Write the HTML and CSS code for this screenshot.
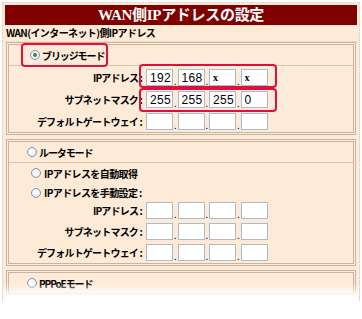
FILE: index.html
```html
<!DOCTYPE html>
<html lang="ja">
<head>
    <meta charset="UTF-8">
    <title>WAN側IPアドレスの設定</title>
    <link rel="stylesheet" href="styles.css">
</head>
<body>

    <div class="frame">
        <!-- タイトル -->
        <div class="title">WAN側IPアドレスの設定</div>
        <div class="subtitle">WAN(インターネット)側IPアドレス</div>

        <!-- ブリッジモード -->
        <div class="section">
            <div class="mode-row bridge">
                <label class="mode"><input type="radio" name="mode" checked>ブリッジモード</label>
                <span class="mark mark-mode"></span>
            </div>
            <div class="fields">
                <div class="field">
                    <span class="label">IPアドレス :</span>
                    <span class="ip"><input value="192">.<input value="168">.<input class="x" value="x">.<input class="x" value="x"></span>
                </div>
                <div class="field">
                    <span class="label">サブネットマスク :</span>
                    <span class="ip"><input value="255">.<input value="255">.<input value="255">.<input value="0"></span>
                </div>
                <div class="field">
                    <span class="label">デフォルトゲートウェイ :</span>
                    <span class="ip"><input>.<input>.<input>.<input></span>
                </div>
                <span class="mark mark-ip"></span>
                <span class="mark mark-mask"></span>
            </div>
        </div>

        <!-- ルータモード -->
        <div class="section">
            <div class="mode-row">
                <label class="mode"><input type="radio" name="mode">ルータモード</label>
            </div>
            <div class="fields router">
                <label class="sub"><input type="radio" name="wan">IPアドレスを自動取得</label>
                <label class="sub"><input type="radio" name="wan">IPアドレスを手動設定 :</label>
                <div class="field">
                    <span class="label">IPアドレス :</span>
                    <span class="ip"><input>.<input>.<input>.<input></span>
                </div>
                <div class="field">
                    <span class="label">サブネットマスク :</span>
                    <span class="ip"><input>.<input>.<input>.<input></span>
                </div>
                <div class="field">
                    <span class="label">デフォルトゲートウェイ :</span>
                    <span class="ip"><input>.<input>.<input>.<input></span>
                </div>
            </div>
        </div>

        <!-- PPPoEモード -->
        <div class="section last">
            <div class="mode-row">
                <label class="mode"><input type="radio" name="mode">PPPoEモード</label>
            </div>
        </div>
    </div>

</body>
</html>
```

FILE: styles.css
```css
body { margin: 0; background: #fff; font-family: "Noto Sans CJK JP", sans-serif; color: #000; }
.frame { position: relative; margin: 2px; border: 1px dotted #d6cbbf; border-bottom: none; padding: 2px; background: #fdebd7; height: 294px; overflow: hidden; }
.frame::after { content: ""; position: absolute; left: -2px; right: -2px; top: 280px; height: 20px; background: linear-gradient(rgba(255,255,255,0), #fff 70%); }
.title { height: 20px; line-height: 20px; background: #800000; color: #fff; text-align: center; font-family: "Liberation Serif", "Noto Sans CJK JP", serif; font-weight: bold; font-size: 15px; letter-spacing: -0.3px; }
.subtitle { height: 16px; line-height: 16px; padding-left: 1px; font-size: 10px; font-weight: bold; letter-spacing: -0.6px; border-bottom: 1px dotted #e0d0c0; }
.section { border: 3px double #c7b5a2; margin: 0 1px 4px 1px; }
.mode-row { position: relative; height: 20px; border-bottom: 1px solid #d9c6b2; padding-left: 18px; display: flex; align-items: center; }
.mode-row.bridge { padding-left: 21px; }
.mode { display: flex; align-items: center; font-size: 10px; font-weight: bold; letter-spacing: -1.1px; }
.fields { position: relative; padding: 3px 0 2px 0; display: flex; flex-direction: column; gap: 5px; }
.router { padding-top: 0; gap: 0; }
.router .field + .field { margin-top: 4px; }
.field { display: flex; align-items: center; height: 17px; }
.label { width: 133px; text-align: right; font-size: 10px; font-weight: bold; letter-spacing: -0.8px; }
.ip { display: flex; align-items: flex-end; font-size: 9px; line-height: 9px; margin-left: 3px; }
.ip input { width: 27px; height: 17px; box-sizing: border-box; border: 1px solid #a9bccd; background: #fff; padding: 0 1px 0 3px; margin: 0 1px 0 1px; font-family: "Liberation Sans", sans-serif; font-size: 12px; letter-spacing: 0.3px; color: #000; }
.ip input.x { font-family: "Liberation Serif", serif; font-weight: bold; font-size: 10px; }
.sub { display: flex; align-items: center; height: 20px; padding-left: 22px; font-size: 10px; font-weight: bold; letter-spacing: -0.6px; }
.sub + .sub { height: 19px; }
input[type=radio] { appearance: none; width: 10px; height: 10px; margin: 0 3px 0 0; border: 1px solid #7b98b6; border-radius: 50%; background: radial-gradient(circle at 40% 40%, #fff, #dfe6ee); box-sizing: border-box; display: grid; place-items: center; }
.mode input[type=radio] { margin-right: 2px; }
input[type=radio]:checked::before { content: ""; width: 4px; height: 4px; border-radius: 50%; background: #3f8a38; }
.mark { position: absolute; border: 2px solid #e0103c; border-radius: 4px; }
.mark-mode { left: 12px; top: -2px; width: 83px; height: 20px; }
.mark-ip { left: 130px; top: -2px; width: 134px; height: 20px; }
.mark-mask { left: 130px; top: 22px; width: 134px; height: 20px; }
.last { border-bottom: none; }
```
